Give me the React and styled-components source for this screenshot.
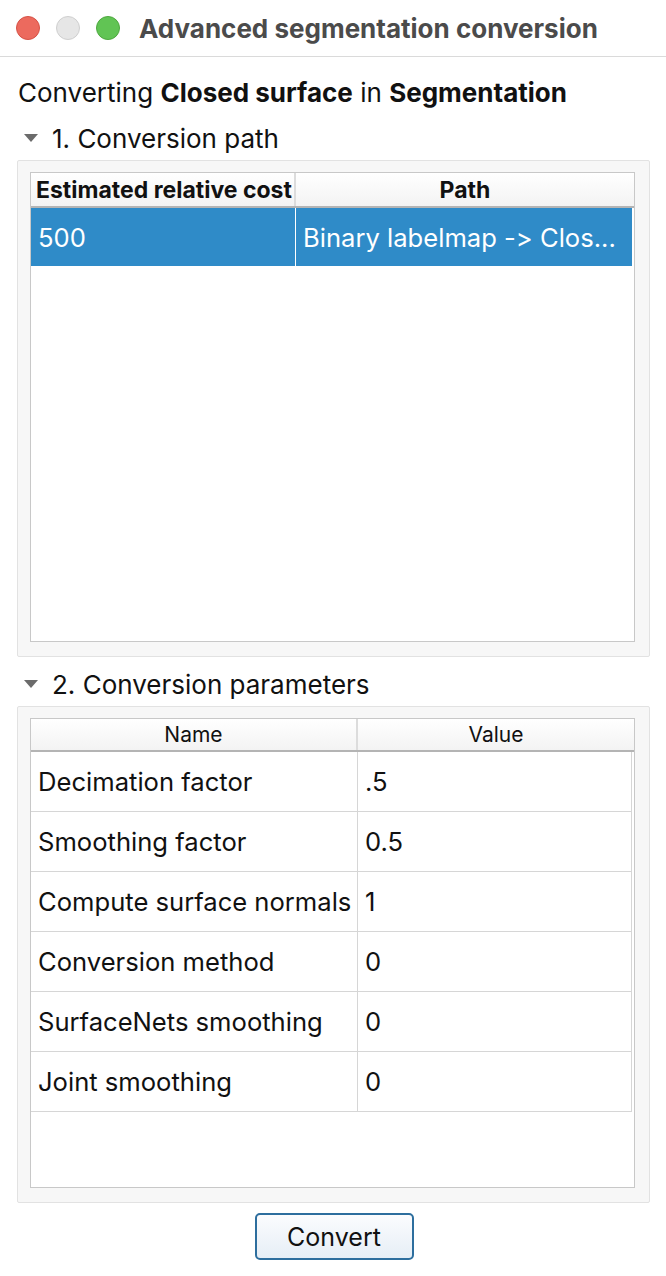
import React from 'react';
import styled, { createGlobalStyle } from 'styled-components';

const GlobalStyle = createGlobalStyle`
  html, body {
    margin: 0;
    padding: 0;
    background: #ffffff;
  }
  body {
    font-family: Inter, Roboto, "Liberation Sans", Arial, sans-serif;
    font-feature-settings: "calt" 0, "liga" 0;
    color: #111;
  }
`

const Window = styled.div`
  width: 666px;
  height: 1276px;
  background: #fff;
  overflow: hidden;
`

const TitleBar = styled.div`
  height: 56px;
  border-bottom: 1px solid #dadada;
  display: flex;
  align-items: center;
  padding-left: 16px;
`

const Light = styled.span`
  width: 22px;
  height: 22px;
  border-radius: 50%;
  background: ${p => p.color};
  border: 1px solid ${p => p.edge};
  margin-right: 16px;
`

const Title = styled.div`
  margin-left: 3px;
  font-size: 26px;
  font-weight: 700;
  color: #4b4b4b;
`

const Body = styled.div`
  padding: 20px 16px 0 17px;
`

const Intro = styled.div`
  font-size: 26px;
  height: 32px;
  line-height: 32px;
  margin-left: 1px;
  b {
    font-weight: 700;
  }
`

const SectionHead = styled.div`
  display: flex;
  align-items: center;
  height: 34px;
  font-size: 26px;
  margin-top: ${p => p.top}px;
  margin-bottom: 5px;
`

const Arrow = styled.span`
  width: 0;
  height: 0;
  border-left: 7px solid transparent;
  border-right: 7px solid transparent;
  border-top: 8px solid #6b6b6b;
  margin-left: 7px;
  margin-right: 14px;
`

const Group = styled.div`
  background: #f7f7f7;
  border: 1px solid #e2e2e2;
  border-radius: 2px;
  padding: 11px 14px 14px 12px;
`

const Table = styled.div`
  height: 468px;
  background: #fff;
  border: 1px solid #c8c8c8;
  overflow: hidden;
`

const HeaderRow = styled.div`
  display: grid;
  grid-template-columns: ${p => p.cols};
  height: ${p => p.h}px;
  background: linear-gradient(#ffffff, #f3f3f3);
  border-bottom: 2px solid #b4b4b4;
`

const HeadCell = styled.div`
  display: flex;
  align-items: center;
  justify-content: ${p => (p.left ? 'flex-start' : 'center')};
  padding-left: ${p => (p.left ? 5 : 0)}px;
  font-size: ${p => (p.bold ? 23 : 21)}px;
  font-weight: ${p => (p.bold ? 700 : 400)};
  white-space: nowrap;
  overflow: hidden;
  border-right: 2px solid #dcdcdc;
  &:last-child {
    border-right: 0;
  }
`

const Row = styled.div`
  box-sizing: border-box;
  display: grid;
  grid-template-columns: ${p => p.cols};
  height: ${p => p.h}px;
  background: ${p => (p.selected ? '#2f8bc8' : '#fff')};
  color: ${p => (p.selected ? '#fff' : '#111')};
  border-bottom: ${p => (p.selected ? 'none' : '1px solid #d6d6d6')};
  margin-right: 2px;
`

const Cell = styled.div`
  display: flex;
  align-items: center;
  padding-left: 7px;
  font-size: 25.6px;
  white-space: nowrap;
  overflow: hidden;
  border-right: 1px solid ${p => (p.selected ? '#ffffff' : '#d6d6d6')};
  &:last-child {
    border-right: ${p => (p.selected ? 'none' : '1px solid #d6d6d6')};
  }
`

const Footer = styled.div`
  display: flex;
  justify-content: center;
  padding-top: 10px;
`

const Button = styled.button`
  width: 159px;
  height: 47px;
  border: 2px solid #2d6e9e;
  border-radius: 5px;
  background: linear-gradient(#fbfcfe, #e6eef6);
  font-family: Inter, Roboto, "Liberation Sans", Arial, sans-serif;
  font-size: 25px;
  color: #111;
  padding: 0;
  margin-left: 1px;
`

const pathCols = '265px 1fr'
const paramCols = '327px 1fr'

const params = [
  ['Decimation factor', '.5'],
  ['Smoothing factor', '0.5'],
  ['Compute surface normals', '1'],
  ['Conversion method', '0'],
  ['SurfaceNets smoothing', '0'],
  ['Joint smoothing', '0'],
]

export default function App() {
  return (
    <Window>
      <GlobalStyle />
      <TitleBar>
        <Light color="#ec6a5e" edge="#d65246" />
        <Light color="#e6e6e6" edge="#cfcfcf" />
        <Light color="#61c454" edge="#4ea83f" />
        <Title>Advanced segmentation conversion</Title>
      </TitleBar>
      <Body>
        <Intro>
          Converting <b>Closed surface</b> in <b>Segmentation</b>
        </Intro>

        <SectionHead top={12}>
          <Arrow />
          1. Conversion path
        </SectionHead>
        <Group>
          <Table>
            <HeaderRow cols={pathCols} h={33}>
              <HeadCell bold left>Estimated relative cost</HeadCell>
              <HeadCell bold>Path</HeadCell>
            </HeaderRow>
            <Row cols={pathCols} h={58} selected>
              <Cell selected>500</Cell>
              <Cell selected>Binary labelmap -&gt; Clos...</Cell>
            </Row>
          </Table>
        </Group>

        <SectionHead top={10}>
          <Arrow />
          2. Conversion parameters
        </SectionHead>
        <Group>
          <Table>
            <HeaderRow cols={paramCols} h={31}>
              <HeadCell>Name</HeadCell>
              <HeadCell>Value</HeadCell>
            </HeaderRow>
            {params.map(([name, value]) => (
              <Row key={name} cols={paramCols} h={60}>
                <Cell>{name}</Cell>
                <Cell>{value}</Cell>
              </Row>
            ))}
          </Table>
        </Group>

        <Footer>
          <Button>Convert</Button>
        </Footer>
      </Body>
    </Window>
  )
}
